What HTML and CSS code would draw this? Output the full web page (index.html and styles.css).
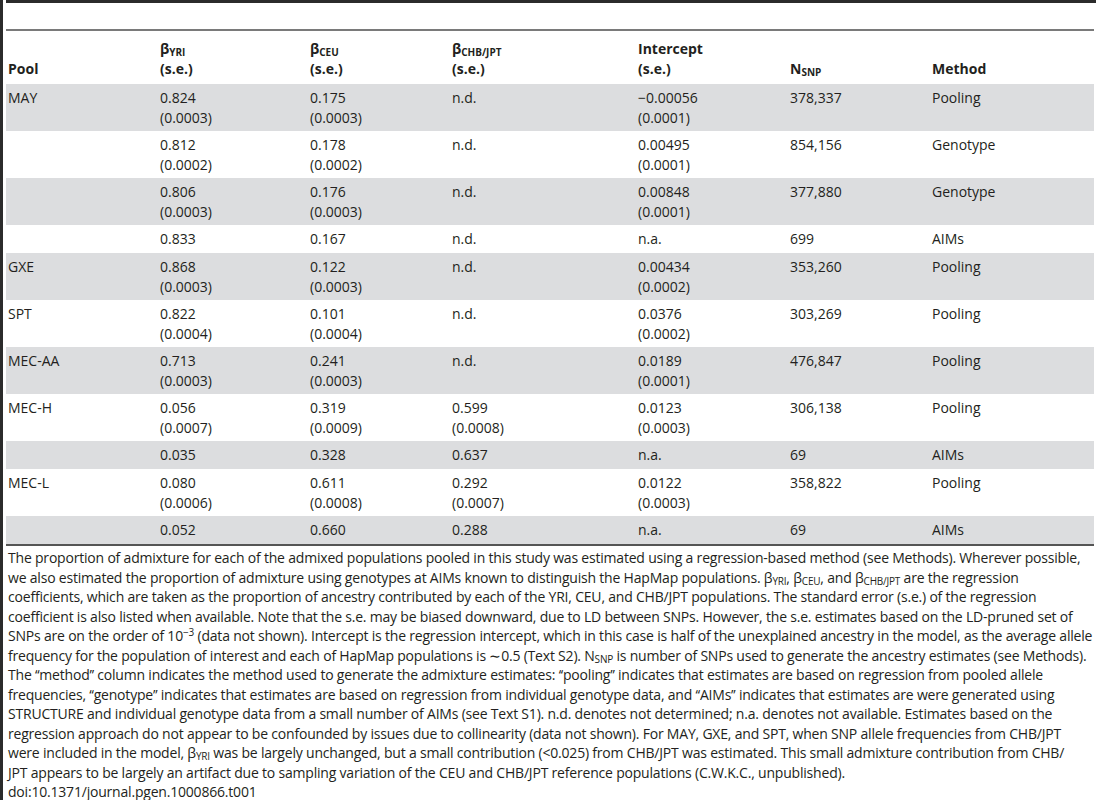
FILE: index.html
```html
<!DOCTYPE html>
<html>
<head>
<meta charset="utf-8">
<link rel="stylesheet" href="styles.css">
</head>
<body>
<div class="frame">
  <div class="topbar"></div>
  <div class="content">
    <table class="data">
      <colgroup>
        <col class="c1"><col class="c2"><col class="c3"><col class="c4"><col class="c5"><col class="c6"><col class="c7">
      </colgroup>
      <thead>
        <tr>
          <th>Pool</th>
          <th>β<sub>YRI</sub><br>(s.e.)</th>
          <th>β<sub>CEU</sub><br>(s.e.)</th>
          <th>β<sub>CHB/JPT</sub><br>(s.e.)</th>
          <th>Intercept<br>(s.e.)</th>
          <th>N<sub>SNP</sub></th>
          <th>Method</th>
        </tr>
      </thead>
      <tbody>
        <tr class="g"><td>MAY</td><td>0.824<br>(0.0003)</td><td>0.175<br>(0.0003)</td><td>n.d.</td><td>−0.00056<br>(0.0001)</td><td>378,337</td><td>Pooling</td></tr>
        <tr><td></td><td>0.812<br>(0.0002)</td><td>0.178<br>(0.0002)</td><td>n.d.</td><td>0.00495<br>(0.0001)</td><td>854,156</td><td>Genotype</td></tr>
        <tr class="g"><td></td><td>0.806<br>(0.0003)</td><td>0.176<br>(0.0003)</td><td>n.d.</td><td>0.00848<br>(0.0001)</td><td>377,880</td><td>Genotype</td></tr>
        <tr class="s"><td></td><td>0.833</td><td>0.167</td><td>n.d.</td><td>n.a.</td><td>699</td><td>AIMs</td></tr>
        <tr class="g"><td>GXE</td><td>0.868<br>(0.0003)</td><td>0.122<br>(0.0003)</td><td>n.d.</td><td>0.00434<br>(0.0002)</td><td>353,260</td><td>Pooling</td></tr>
        <tr><td>SPT</td><td>0.822<br>(0.0004)</td><td>0.101<br>(0.0004)</td><td>n.d.</td><td>0.0376<br>(0.0002)</td><td>303,269</td><td>Pooling</td></tr>
        <tr class="g"><td>MEC-AA</td><td>0.713<br>(0.0003)</td><td>0.241<br>(0.0003)</td><td>n.d.</td><td>0.0189<br>(0.0001)</td><td>476,847</td><td>Pooling</td></tr>
        <tr><td>MEC-H</td><td>0.056<br>(0.0007)</td><td>0.319<br>(0.0009)</td><td>0.599<br>(0.0008)</td><td>0.0123<br>(0.0003)</td><td>306,138</td><td>Pooling</td></tr>
        <tr class="g s"><td></td><td>0.035</td><td>0.328</td><td>0.637</td><td>n.a.</td><td>69</td><td>AIMs</td></tr>
        <tr><td>MEC-L</td><td>0.080<br>(0.0006)</td><td>0.611<br>(0.0008)</td><td>0.292<br>(0.0007)</td><td>0.0122<br>(0.0003)</td><td>358,822</td><td>Pooling</td></tr>
        <tr class="g s last"><td></td><td>0.052</td><td>0.660</td><td>0.288</td><td>n.a.</td><td>69</td><td>AIMs</td></tr>
      </tbody>
    </table>
    <p class="note">The proportion of admixture for each of the admixed populations pooled in this study was estimated using a regression-based method (see Methods). Wherever possible,<br>we also estimated the proportion of admixture using genotypes at AIMs known to distinguish the HapMap populations. β<sub>YRI</sub>, β<sub>CEU</sub>, and β<sub>CHB/JPT</sub> are the regression<br>coefficients, which are taken as the proportion of ancestry contributed by each of the YRI, CEU, and CHB/JPT populations. The standard error (s.e.) of the regression<br>coefficient is also listed when available. Note that the s.e. may be biased downward, due to LD between SNPs. However, the s.e. estimates based on the LD-pruned set of<br>SNPs are on the order of 10<sup>−3</sup> (data not shown). Intercept is the regression intercept, which in this case is half of the unexplained ancestry in the model, as the average allele<br>frequency for the population of interest and each of HapMap populations is ∼0.5 (Text S2). N<sub>SNP</sub> is number of SNPs used to generate the ancestry estimates (see Methods).<br>The ‘‘method’’ column indicates the method used to generate the admixture estimates: ‘‘pooling’’ indicates that estimates are based on regression from pooled allele<br>frequencies, ‘‘genotype’’ indicates that estimates are based on regression from individual genotype data, and ‘‘AIMs’’ indicates that estimates are were generated using<br>STRUCTURE and individual genotype data from a small number of AIMs (see Text S1). n.d. denotes not determined; n.a. denotes not available. Estimates based on the<br>regression approach do not appear to be confounded by issues due to collinearity (data not shown). For MAY, GXE, and SPT, when SNP allele frequencies from CHB/JPT<br>were included in the model, β<sub>YRI</sub> was be largely unchanged, but a small contribution (&lt;0.025) from CHB/JPT was estimated. This small admixture contribution from CHB/<br>JPT appears to be largely an artifact due to sampling variation of the CEU and CHB/JPT reference populations (C.W.K.C., unpublished).<br>doi:10.1371/journal.pgen.1000866.t001</p>
  </div>
</div>
</body>
</html>
```
FILE: styles.css
```css
html, body {
  margin: 0;
  padding: 0;
  background: #ffffff;
}
body {
  font-family: "Open Sans", "Noto Sans", sans-serif;
  color: #231f20;
  width: 1096px;
  height: 800px;
  overflow: hidden;
}
.frame {
  border-left: 3px solid #2b2b2b;
  padding-left: 3px;
  height: 800px;
  box-sizing: border-box;
}
.topbar {
  height: 3px;
  background: #2b2b2b;
}
.content {
  padding-top: 26px;
}
.data {
  border-collapse: collapse;
  width: 1088px;
  table-layout: fixed;
  font-size: 14px;
  line-height: 20px;
  border-top: 2px solid #7a7a7a;
}
.c1 { width: 152px; }
.c2 { width: 150px; }
.c3 { width: 142px; }
.c4 { width: 186px; }
.c5 { width: 152px; }
.c6 { width: 142px; }
.c7 { width: 164px; }
.data th {
  text-align: left;
  vertical-align: bottom;
  font-weight: 700;
  padding: 5px 2px 5px 2px;
  height: 43px;
}
.data td {
  vertical-align: top;
  padding: 4px 2px 3px 2px;
  height: 40px;
}
.data tr.s td {
  height: 20px;
  padding: 4px 2px 4px 2px;
}
.data tr.g td {
  background: #dcdddf;
}
.data tr.last td {
  border-bottom: 2px solid #555;
}
.data th sub {
  font-size: 10px;
  vertical-align: -2px;
  line-height: 0;
}
.note {
  margin: 2px 0 0 2px;
  font-size: 14px;
  line-height: 19.5px;
  white-space: nowrap;
  letter-spacing: -0.2px;
}
.note sub {
  font-size: 10px;
  vertical-align: -2px;
  line-height: 0;
}
.note sup {
  font-size: 10px;
  vertical-align: 5px;
  line-height: 0;
}
```
